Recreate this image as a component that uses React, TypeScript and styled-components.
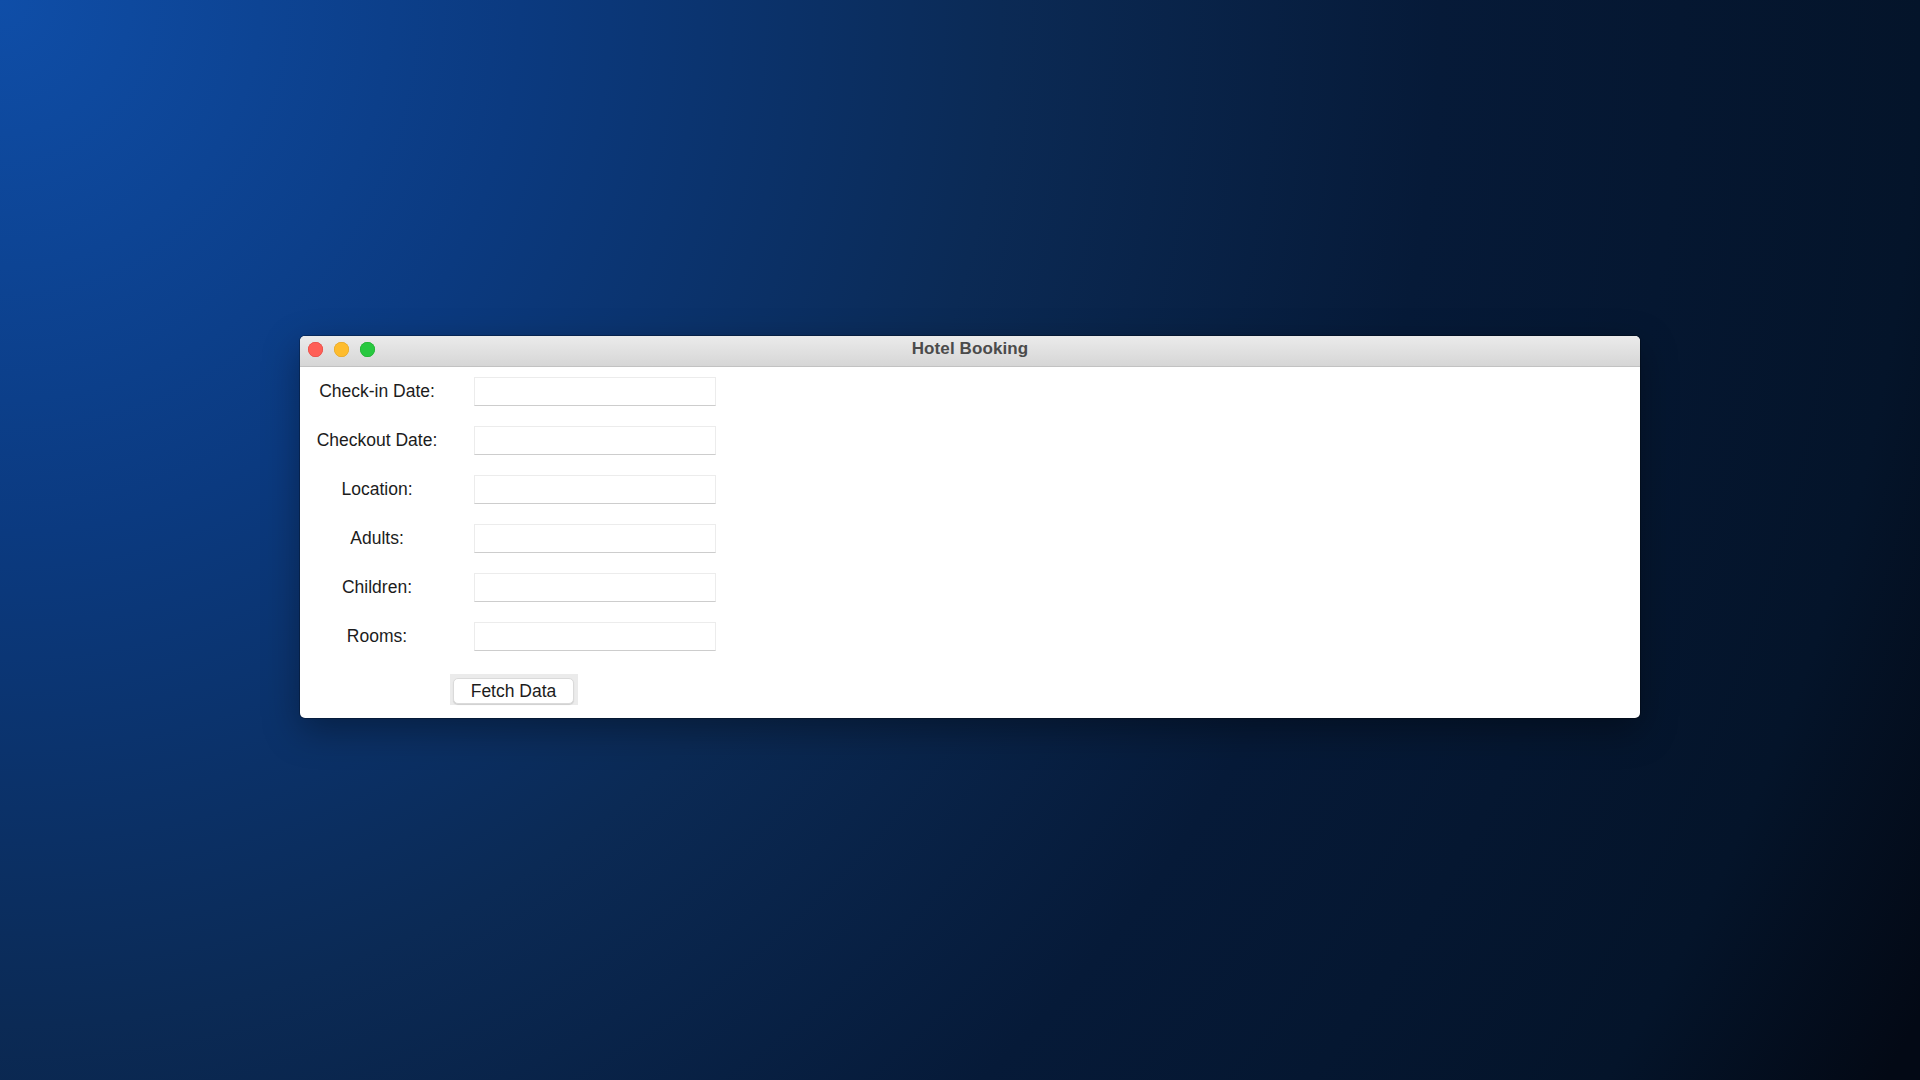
import React from "react";
import styled, { createGlobalStyle } from "styled-components";

const GlobalStyle = createGlobalStyle`
  html, body {
    margin: 0;
    padding: 0;
    width: 100%;
    height: 100%;
  }
  body {
    font-family: "Liberation Sans", Arial, Helvetica, sans-serif;
    overflow: hidden;
  }
  * { box-sizing: border-box; }
`;

const Desktop = styled.div`
  width: 1920px;
  height: 1080px;
  padding: 336px 0 0 300px;
  background: radial-gradient(
    ellipse 2000px 2050px at 0 0,
    #0f4ea8 0%,
    #0b3a80 26%,
    #0b2a55 50%,
    #061a38 72%,
    #04142a 96%,
    #030915 108%
  );
`;

const Window = styled.div`
  width: 1340px;
  background: #ffffff;
  border-radius: 5px;
  overflow: hidden;
  box-shadow: 0 12px 36px rgba(0, 0, 0, 0.35), 0 0 0 1px rgba(0, 0, 0, 0.25);
`;

const TitleBar = styled.div`
  height: 31px;
  display: grid;
  grid-template-columns: 1fr auto 1fr;
  align-items: center;
  padding: 0 0 4px 0;
  background: linear-gradient(#ebebeb, #d6d6d6);
  border-bottom: 1px solid #c2c2c2;
`;

const Lights = styled.div`
  display: flex;
  gap: 11px;
  padding-left: 8px;
`;

const Light = styled.span<{ $color: string; $edge: string }>`
  width: 15px;
  height: 15px;
  border-radius: 50%;
  background: ${(p) => p.$color};
  box-shadow: inset 0 0 0 0.5px ${(p) => p.$edge};
`;

const Title = styled.div`
  font-size: 17px;
  font-weight: 700;
  color: #4b4b4b;
  letter-spacing: 0.1px;
`;

const Body = styled.div`
  padding: 10px 0 13px 5px;
`;

const Form = styled.div`
  display: grid;
  grid-template-columns: 144px 242px;
  column-gap: 25px;
  row-gap: 20px;
  align-items: center;
`;

const Label = styled.label`
  text-align: center;
  font-size: 17.5px;
  color: #1c1c1c;
`;

const Input = styled.input`
  height: 29px;
  width: 242px;
  margin: 0;
  padding: 0 6px;
  border: 1px solid #ececec;
  border-bottom-color: #cdcdcd;
  background: #ffffff;
  outline: none;
  font-family: inherit;
  font-size: 16px;
`;

const ButtonRow = styled.div`
  display: flex;
  padding-left: 145px;
  margin-top: 23px;
`;

const ButtonFrame = styled.div`
  background: #ebebeb;
  padding: 4px 4px 1px 3px;
  display: flex;
`;

const Button = styled.button`
  width: 121px;
  height: 26px;
  margin: 0;
  padding: 0;
  border-radius: 5px;
  border: 1px solid #dadada;
  background: #ffffff;
  box-shadow: 0 1px 1px rgba(0, 0, 0, 0.12);
  font-family: "Liberation Sans", Arial, sans-serif;
  font-size: 17.5px;
  color: #1c1c1c;
  display: flex;
  align-items: center;
  justify-content: center;
`;

const fields = [
  "Check-in Date:",
  "Checkout Date:",
  "Location:",
  "Adults:",
  "Children:",
  "Rooms:",
];

export default function App() {
  return (
    <>
      <GlobalStyle />
      <Desktop>
        <Window>
          <TitleBar>
            <Lights>
              <Light $color="#fe5f57" $edge="#e0443e" />
              <Light $color="#febc2e" $edge="#dea123" />
              <Light $color="#28c840" $edge="#1aab29" />
            </Lights>
            <Title>Hotel Booking</Title>
            <div />
          </TitleBar>
          <Body>
            <Form>
              {fields.map((f) => (
                <React.Fragment key={f}>
                  <Label>{f}</Label>
                  <Input type="text" />
                </React.Fragment>
              ))}
            </Form>
            <ButtonRow>
              <ButtonFrame>
                <Button>Fetch Data</Button>
              </ButtonFrame>
            </ButtonRow>
          </Body>
        </Window>
      </Desktop>
    </>
  );
}
